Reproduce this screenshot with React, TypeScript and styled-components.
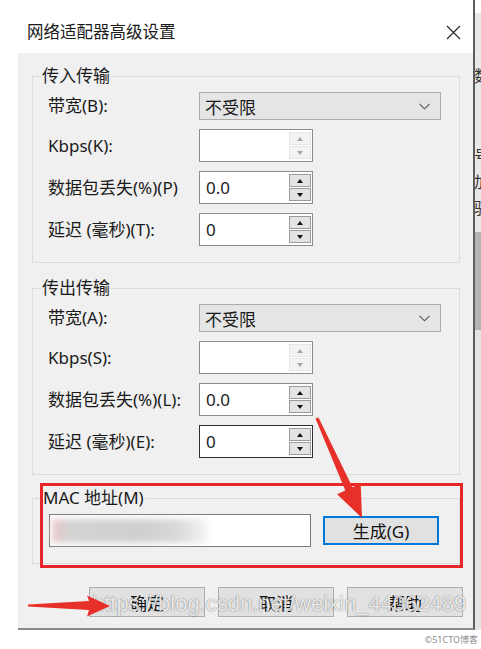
import React from 'react';
import styled, { createGlobalStyle } from 'styled-components';

const GlobalStyle = createGlobalStyle`
  html, body {
    margin: 0;
    padding: 0;
    background: #ffffff;
  }
  body {
    font-family: "Noto Sans", "Noto Sans CJK SC", sans-serif;
    color: #1a1a1a;
  }
`;

const Screen = styled.div`
  position: relative;
  width: 481px;
  height: 649px;
  overflow: hidden;
  display: flex;
  flex-direction: column;
`;

const Stage = styled.div`
  display: flex;
  padding-left: 18px;
`;

const Dialog = styled.div`
  width: 455px;
  display: flex;
  flex-direction: column;
  border-right: 2px solid #5c5c5c;
  border-bottom: 2px solid #8a8a8a;
`;

const TitleBar = styled.div`
  height: 53px;
  box-sizing: border-box;
  padding: 11px 12px 0 9px;
  display: flex;
  align-items: center;
  justify-content: space-between;
  background: #ffffff;
`;

const Title = styled.span`
  font-size: 16.5px;
  line-height: 20px;
  color: #1a1a1a;
`;

const Body = styled.div`
  position: relative;
  background: #f0f0f0;
  padding: 14px 13px 11px 14px;
  display: flex;
  flex-direction: column;
`;

const GroupBox = styled.fieldset<{ $gap?: number; $inset?: number }>`
  margin: ${p => p.$gap ?? 0}px 0 0 0;
  padding: 7px 0 16px ${p => p.$inset ?? 15}px;
  border: 1px solid #dcdcdc;
  min-width: 0;
`;

const Legend = styled.legend`
  font-size: 17px;
  line-height: 18px;
  padding: 0 1px;
  margin-left: -7px;
  color: #1a1a1a;
`;

const FormGrid = styled.div`
  display: grid;
  grid-template-columns: 151px 1fr;
  row-gap: 9px;
  align-items: center;
`;

const Label = styled.span`
  font-size: 17px;
  line-height: 20px;
  white-space: nowrap;
`;

const Select = styled.div`
  width: 242px;
  height: 28px;
  box-sizing: border-box;
  background: #e5e5e5;
  border: 1px solid #adadad;
  display: flex;
  align-items: center;
  justify-content: space-between;
  padding: 0 10px 0 5px;
  font-size: 17px;
`;

const SpinBox = styled.div<{ $focused?: boolean }>`
  width: 114px;
  height: 33px;
  box-sizing: border-box;
  display: flex;
  background: #ffffff;
  border: 1px solid ${p => (p.$focused ? '#2e2e2e' : '#8c8c8c')};
  padding: 2px 1px 2px 0;
`;

const Field = styled.div`
  flex: 1;
  display: flex;
  align-items: center;
  padding-left: 6px;
  font-size: 17px;
  color: #222;
`;

const Spinner = styled.div`
  width: 22px;
  display: flex;
  flex-direction: column;
  gap: 1px;
`;

const SpinButton = styled.div<{ $muted?: boolean }>`
  flex: 1;
  display: flex;
  align-items: center;
  justify-content: center;
  background: ${p => (p.$muted ? '#f3f3f3' : '#e4e4e4')};
  border: 1px solid ${p => (p.$muted ? '#e6e6e6' : '#9c9c9c')};
`;

const Arrow = styled.span<{ $down?: boolean; $muted?: boolean }>`
  width: 0;
  height: 0;
  border-left: 3.5px solid transparent;
  border-right: 3.5px solid transparent;
  ${p =>
    p.$down
      ? `border-top: 4px solid ${p.$muted ? '#a6a6a6' : '#111'};`
      : `border-bottom: 4px solid ${p.$muted ? '#a6a6a6' : '#111'};`}
`;

const MacRow = styled.div`
  display: flex;
  align-items: center;
  gap: 12px;
`;

const MacInput = styled.div`
  width: 262px;
  height: 33px;
  box-sizing: border-box;
  background: #ffffff;
  border: 1px solid #7a7a7a;
  display: flex;
  align-items: center;
  padding-left: 2px;
`;

const Smudge = styled.div`
  width: 156px;
  height: 24px;
  background: linear-gradient(90deg, #eac9c9 0%, #d3d3d3 12%, #cfcfcf 55%, #d8d8d8 80%, rgba(230, 230, 230, 0.4) 100%);
  filter: blur(3px);
`;

const Button = styled.div<{ $accent?: boolean; $h?: number }>`
  width: 116px;
  height: ${p => p.$h ?? 30}px;
  box-sizing: border-box;
  display: flex;
  align-items: center;
  justify-content: center;
  background: #e1e1e1;
  border: ${p => (p.$accent ? '2px solid #0078d7' : '1px solid #adadad')};
  font-size: 17px;
  color: #111;
`;

const ButtonRow = styled.div`
  display: flex;
  justify-content: flex-end;
  gap: 13px;
  margin-top: 23px;
  margin-right: -3px;
`;

const Highlight = styled.div`
  position: absolute;
  left: 22px;
  top: 430px;
  width: 423px;
  height: 85px;
  box-sizing: border-box;
  border: 3px solid #e8262a;
  pointer-events: none;
`;

const Strip = styled.div`
  width: 6px;
  overflow: hidden;
  display: flex;
  flex-direction: column;
  background: linear-gradient(180deg, #ffffff 0, #ffffff 13px, #e9e9e9 13px, #e9e9e9 232px, #b4b4b4 232px, #b4b4b4 330px, #e4e4e4 330px, #e4e4e4 632px);
`;

const StripChar = styled.span<{ $top: number }>`
  margin-top: ${p => p.$top}px;
  margin-left: -1px;
  font-size: 16px;
  line-height: 18px;
  color: #333;
  white-space: nowrap;
`;

const Footer = styled.div`
  flex: 1;
  display: flex;
  align-items: center;
  justify-content: flex-end;
  padding-right: 3px;
  font-size: 9px;
  color: #8c8c8c;
`;

const Watermark = styled.div`
  position: absolute;
  left: 92px;
  top: 591px;
  font-family: "Liberation Sans", Arial, sans-serif;
  font-size: 22px;
  color: rgba(255, 255, 255, 0.85);
  text-shadow: 0 0 1px rgba(0, 0, 0, 0.45), 0 0 2px rgba(0, 0, 0, 0.2);
  white-space: nowrap;
  pointer-events: none;
`;

const Overlay = styled.svg`
  position: absolute;
  left: 0;
  top: 0;
  pointer-events: none;
`;

type SpinRow = { label: string; value: string; muted?: boolean; focused?: boolean };

const Spin: React.FC<{ row: SpinRow }> = ({ row }) => (
  <SpinBox $focused={row.focused}>
    <Field>{row.value}</Field>
    <Spinner>
      <SpinButton $muted={row.muted}>
        <Arrow $muted={row.muted} />
      </SpinButton>
      <SpinButton $muted={row.muted}>
        <Arrow $down $muted={row.muted} />
      </SpinButton>
    </Spinner>
  </SpinBox>
);

const Chevron = () => (
  <svg width="11" height="7" viewBox="0 0 11 7">
    <polyline points="0.5,0.8 5.5,5.8 10.5,0.8" fill="none" stroke="#555" strokeWidth="1.1" />
  </svg>
);

const CloseIcon = () => (
  <svg width="15" height="15" viewBox="0 0 15 15">
    <path d="M1 1 L14 14 M14 1 L1 14" stroke="#2b2b2b" strokeWidth="1.2" />
  </svg>
);

const groups = [
  {
    title: '传入传输',
    gap: 0,
    bandwidth: '带宽(B):',
    rows: [
      { label: 'Kbps(K):', value: '', muted: true },
      { label: '数据包丢失(%)(P)', value: '0.0' },
      { label: '延迟 (毫秒)(T):', value: '0' },
    ] as SpinRow[],
  },
  {
    title: '传出传输',
    gap: 16,
    bandwidth: '带宽(A):',
    rows: [
      { label: 'Kbps(S):', value: '', muted: true },
      { label: '数据包丢失(%)(L):', value: '0.0' },
      { label: '延迟 (毫秒)(E):', value: '0', focused: true },
    ] as SpinRow[],
  },
];

const App: React.FC = () => {
  return (
    <Screen>
      <GlobalStyle />
      <Stage>
        <Dialog>
          <TitleBar>
            <Title>网络适配器高级设置</Title>
            <CloseIcon />
          </TitleBar>
          <Body>
            {groups.map(group => (
              <GroupBox key={group.title} $gap={group.gap}>
                <Legend>{group.title}</Legend>
                <FormGrid>
                  <Label>{group.bandwidth}</Label>
                  <Select>
                    <span>不受限</span>
                    <Chevron />
                  </Select>
                  {group.rows.map(row => (
                    <React.Fragment key={row.label}>
                      <Label>{row.label}</Label>
                      <Spin row={row} />
                    </React.Fragment>
                  ))}
                </FormGrid>
              </GroupBox>
            ))}

            <GroupBox $gap={14} $inset={16}>
              <Legend>MAC 地址(M)</Legend>
              <MacRow>
                <MacInput>
                  <Smudge />
                </MacInput>
                <Button $accent $h={29}>生成(G)</Button>
              </MacRow>
            </GroupBox>

            <ButtonRow>
              <Button>确定</Button>
              <Button>取消</Button>
              <Button>帮助</Button>
            </ButtonRow>

            <Highlight />
          </Body>
        </Dialog>
        <Strip>
          <StripChar $top={67}>数</StripChar>
          <StripChar $top={62}>号</StripChar>
          <StripChar $top={8}>加</StripChar>
          <StripChar $top={8}>驳</StripChar>
        </Strip>
      </Stage>
      <Footer>©51CTO博客</Footer>

      <Watermark>https://blog.csdn.net/weixin_44062489</Watermark>

      <Overlay width="481" height="649" viewBox="0 0 481 649">
        <polygon
          points="315.5,418.5 345.3,490.5 337.1,494.2 362,518 360.7,483.6 352.5,487.3 318.5,417.5"
          fill="#e8302a"
        />
        <polygon points="28,604.5 89,601 87,595.5 110,606 87,616.5 89,610 28,606.5" fill="#e8302a" />
      </Overlay>
    </Screen>
  );
};

export default App;
